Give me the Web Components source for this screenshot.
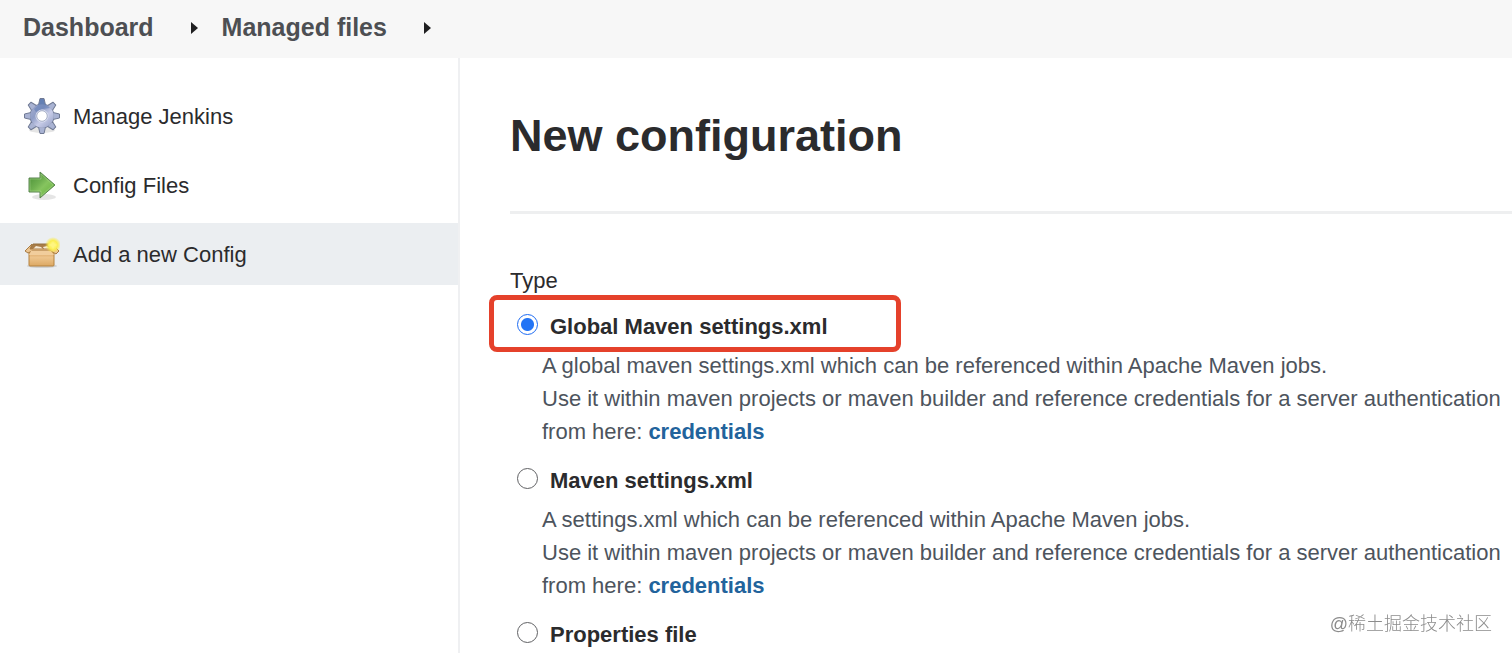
<!DOCTYPE html>
<html lang="en">
<head>
<meta charset="utf-8">
<meta name="viewport" content="width=device-width, initial-scale=1">
<title>New configuration</title>
<style>
    html {
        scrollbar-width: none;
    }

    body {
        margin: 0;
        background: #fff;
        color: #2b2b2d;
        font-family: "Liberation Sans", Arial, "Noto Sans CJK SC", sans-serif;
        font-size: 22px;
        line-height: 33px;
    }
</style>
</head>
<body>
<config-page>
    <crumb-bar slot="header">
        <crumb-item href="#dashboard">Dashboard</crumb-item>
        <crumb-item href="#files">Managed files</crumb-item>
    </crumb-bar>

    <side-panel slot="side">
        <side-task href="#manage">
            <svg slot="icon" viewBox="0 0 36 36" width="36" height="36" aria-hidden="true">
                <defs>
                    <linearGradient id="gear" x1="0" y1="0" x2="1" y2="1">
                        <stop offset="0" stop-color="#a3add0"/>
                        <stop offset=".35" stop-color="#8f9dc6"/>
                        <stop offset=".6" stop-color="#c8cce8"/>
                        <stop offset="1" stop-color="#8f9cc2"/>
                    </linearGradient>
                </defs>
                <ellipse cx="18" cy="32" rx="13" ry="3" fill="#000" opacity=".1"/>
                <circle cx="18" cy="18" r="12.5" fill="#707a94"/>
                <g fill="#a9b3d3" stroke="#707a94" stroke-linejoin="round">
                    <path fill="#6480b4" d="M14.5 7 16 .5h4L21.500 7z"/>
                    <path d="M14.5 7 16 .5h4L21.500 7z" transform="rotate(45 18 18)"/>
                    <path d="M14.5 7 16 .5h4L21.500 7z" transform="rotate(90 18 18)"/>
                    <path d="M14.5 7 16 .5h4L21.500 7z" transform="rotate(135 18 18)"/>
                    <path d="M14.5 7 16 .5h4L21.500 7z" transform="rotate(180 18 18)"/>
                    <path d="M14.5 7 16 .5h4L21.500 7z" transform="rotate(225 18 18)"/>
                    <path d="M14.5 7 16 .5h4L21.500 7z" transform="rotate(270 18 18)"/>
                    <path d="M14.5 7 16 .5h4L21.500 7z" transform="rotate(315 18 18)"/>
                </g>
                <circle cx="18" cy="18" r="11.700" fill="url(#gear)"/>
                <path fill="#5b7ab3" opacity=".5" d="M15 6h6l5 4-7 1-7 3-2-3z"/>
                <circle cx="18" cy="18" r="6" fill="#fff" stroke="#dfe3f3"/>
                <circle cx="18" cy="18" r="5.300" fill="#fff" stroke="#7d89ad" stroke-width=".7"/>
            </svg>
            Manage Jenkins
        </side-task>
        <side-task href="#config">
            <svg slot="icon" viewBox="0 0 36 36" width="36" height="36" aria-hidden="true">
                <defs>
                    <linearGradient id="arrow" x1="0" y1="0" x2="1" y2="1">
                        <stop offset="0" stop-color="#478d34"/>
                        <stop offset=".4" stop-color="#6fb050"/>
                        <stop offset=".55" stop-color="#86c45f"/>
                        <stop offset="1" stop-color="#5fae35"/>
                    </linearGradient>
                </defs>
                <ellipse cx="20" cy="30" rx="12" ry="3" fill="#000" opacity=".1"/>
                <path fill="url(#arrow)" stroke="#5a8550" stroke-linejoin="round" d="M5 11h11V5l15 13-15 13v-6H5z"/>
                <path fill="none" stroke="#b5dd9b" opacity=".4" d="M6 24V12h11V7l12 11-12 11v-5H6"/>
            </svg>
            Config Files
        </side-task>
        <side-task href="#add" active>
            <svg slot="icon" viewBox="0 0 36 36" width="36" height="36" aria-hidden="true">
                <defs>
                    <linearGradient id="box" x1="0" y1="0" x2="0" y2="1">
                        <stop offset="0" stop-color="#d9a565"/>
                        <stop offset=".4" stop-color="#edc48c"/>
                        <stop offset="1" stop-color="#dca863"/>
                    </linearGradient>
                    <radialGradient id="glow">
                        <stop offset="0" stop-color="#fffb9b"/>
                        <stop offset=".55" stop-color="#fbee50"/>
                        <stop offset="1" stop-color="#fbe93c" stop-opacity="0"/>
                    </radialGradient>
                </defs>
                <ellipse cx="18" cy="30" rx="15" ry="2" fill="#000" opacity=".12"/>
                <path fill="#a97d48" stroke="#94703f" stroke-linejoin="round" d="M9 8h18l4 7H5z"/>
                <path fill="#f5ead6" d="m9 13 3-3 5 1 2 2zm10-2 4-1 4 3h-7z"/>
                <path fill="url(#box)" stroke="#b5823f" stroke-linejoin="round" d="M5 16h25v13q0 1-1 1H6q-1 0-1-1z"/>
                <path fill="#ecc591" stroke="#a87b43" stroke-linejoin="round" d="m8 8-7 7 3 2 4-2h19l5 3 3-3-6-6 1 4H6z"/>
                <path fill="#f1cd9c" d="m7 15-2 4h25l-3-4z"/>
                <circle cx="29" cy="9" r="8" fill="url(#glow)"/>
                <path fill="#fff580" d="m29 5 1 3 4 1-4 1-1 4-1-4-4-1 4-1z"/>
            </svg>
            Add a new Config
        </side-task>
    </side-panel>

    <h1 slot="title">New configuration</h1>
    <type-chooser label="Type">
        <type-option label="Global Maven settings.xml" checked highlighted>
            A global maven settings.xml which can be referenced within Apache Maven jobs.<br>
            Use it within maven projects or maven builder and reference credentials for a server authentication from here: <a href="#credentials">credentials</a>
        </type-option>
        <type-option label="Maven settings.xml">
            A settings.xml which can be referenced within Apache Maven jobs.<br>
            Use it within maven projects or maven builder and reference credentials for a server authentication from here: <a href="#credentials">credentials</a>
        </type-option>
        <type-option label="Properties file"></type-option>
    </type-chooser>
</config-page>
<water-mark>@稀土掘金技术社区</water-mark>

<script>
class BaseElement extends HTMLElement {
    constructor() {
        super();
        this.attachShadow({ mode: 'open' });
        this.shadowRoot.innerHTML = this.render();
    }

    render() {
        return '<slot></slot>';
    }
}

class ConfigPage extends BaseElement {
    render() {
        return `
            <style>
                :host {
                    display: flex;
                    flex-direction: column;
                    min-height: 100vh;
                }

                .columns {
                    display: flex;
                    flex: 1;
                }

                main {
                    flex: 1;
                    min-width: 0;
                    padding: 48px 0 0 50px;
                }

                ::slotted(h1) {
                    margin: 0;
                    font-size: 45px;
                    line-height: 60px;
                }

                hr {
                    height: 3px;
                    margin: 45px 0 50px;
                    border: 0;
                    background: #eeeff0;
                }
            </style>
            <slot name="header"></slot>
            <div class="columns">
                <slot name="side"></slot>
                <main>
                    <slot name="title"></slot>
                    <hr>
                    <slot></slot>
                </main>
            </div>
        `;
    }
}

class CrumbBar extends BaseElement {
    render() {
        return `
            <style>
                :host {
                    display: block;
                    background: #f7f7f7;
                }

                nav {
                    display: flex;
                    gap: 24px;
                    padding: 11px 23px 14px;
                }
            </style>
            <nav aria-label="Breadcrumb"><slot></slot></nav>
        `;
    }
}

class CrumbItem extends BaseElement {
    render() {
        return `
            <style>
                :host {
                    display: flex;
                    align-items: center;
                    gap: 37px;
                }

                a {
                    color: #4d4f53;
                    font-size: 25px;
                    font-weight: bold;
                    text-decoration: none;
                }

                svg {
                    display: block;
                }
            </style>
            <a href="${this.getAttribute('href')}"><slot></slot></a>
            <svg viewBox="0 0 7 12" width="7" height="12" aria-hidden="true"><path d="M0 0 7 6 0 12z" fill="#1f1f21"/></svg>
        `;
    }
}

class SidePanel extends BaseElement {
    render() {
        return `
            <style>
                :host {
                    display: block;
                    box-sizing: border-box;
                    flex: 0 0 460px;
                    border-right: 2px solid #eff0f2;
                }

                nav {
                    display: flex;
                    flex-direction: column;
                    gap: 7px;
                    padding-top: 27px;
                }
            </style>
            <nav aria-label="Tasks"><slot></slot></nav>
        `;
    }
}

class SideTask extends BaseElement {
    render() {
        return `
            <style>
                :host {
                    display: block;
                }

                a {
                    display: flex;
                    align-items: center;
                    gap: 13px;
                    height: 62px;
                    padding: 0 24px;
                    color: #2b2b2d;
                    text-decoration: none;
                }

                :host([active]) a,
                a:hover {
                    background: #ebeef1;
                }
            </style>
            <a href="${this.getAttribute('href')}"><slot name="icon"></slot><span><slot></slot></span></a>
        `;
    }
}

class TypeChooser extends BaseElement {
    constructor() {
        super();
        // radios live in separate shadow roots, so the group is kept in sync here
        this.addEventListener('typechange', (e) => {
            this.querySelectorAll('type-option').forEach((option) => {
                option.checked = option === e.target;
            });
        });
    }

    render() {
        return `
            <style>
                :host {
                    display: block;
                }

                .label {
                    padding-top: 1px;
                    line-height: 31px;
                }
            </style>
            <div role="radiogroup" aria-labelledby="label">
                <div class="label" id="label">${this.getAttribute('label')}</div>
                <slot></slot>
            </div>
        `;
    }
}

class TypeOption extends BaseElement {
    constructor() {
        super();
        this.input = this.shadowRoot.querySelector('input');
        this.input.addEventListener('change', () => {
            this.dispatchEvent(new CustomEvent('typechange', { bubbles: true }));
        });
    }

    set checked(value) {
        this.input.checked = value;
    }

    render() {
        return `
            <style>
                :host {
                    display: block;
                    position: relative;
                }

                .head {
                    display: flex;
                    align-items: flex-start;
                    gap: 12px;
                    padding: 14px 0 6px 7px;
                }

                input {
                    appearance: none;
                    box-sizing: border-box;
                    width: 21px;
                    height: 21px;
                    margin: 4px 0 0;
                    border: 1px solid #606164;
                    border-radius: 50%;
                    background: #fff;
                }

                input:checked {
                    border-color: #1d6bf3;
                    background: radial-gradient(circle, #2374f5 6px, #fff 7px);
                }

                label {
                    font-weight: bold;
                }

                .text {
                    padding: 0 0 2px 32px;
                    color: #4d545d;
                }

                ::slotted(a) {
                    color: #22639c;
                    font-weight: bold;
                    text-decoration: none;
                }

                :host([highlighted])::after {
                    content: "";
                    position: absolute;
                    top: -1px;
                    left: -21px;
                    box-sizing: border-box;
                    width: 412px;
                    height: 57px;
                    border: 5px solid #e5412b;
                    border-radius: 8px;
                    pointer-events: none;
                }
            </style>
            <div class="head">
                <input type="radio" id="type" name="type" ${this.hasAttribute('checked') ? 'checked' : ''}>
                <label for="type">${this.getAttribute('label')}</label>
            </div>
            <div class="text"><slot></slot></div>
        `;
    }
}

class WaterMark extends BaseElement {
    render() {
        return `
            <style>
                :host {
                    position: fixed;
                    right: 20px;
                    bottom: 15px;
                    color: #8c8c8c;
                    font-family: "Liberation Sans", "Noto Sans CJK SC", sans-serif;
                    font-size: 18px;
                    font-weight: 300;
                    line-height: 27px;
                    pointer-events: none;
                }
            </style>
            <slot></slot>
        `;
    }
}

customElements.define('config-page', ConfigPage);
customElements.define('crumb-bar', CrumbBar);
customElements.define('crumb-item', CrumbItem);
customElements.define('side-panel', SidePanel);
customElements.define('side-task', SideTask);
customElements.define('type-chooser', TypeChooser);
customElements.define('type-option', TypeOption);
customElements.define('water-mark', WaterMark);
</script>
</body>
</html>
